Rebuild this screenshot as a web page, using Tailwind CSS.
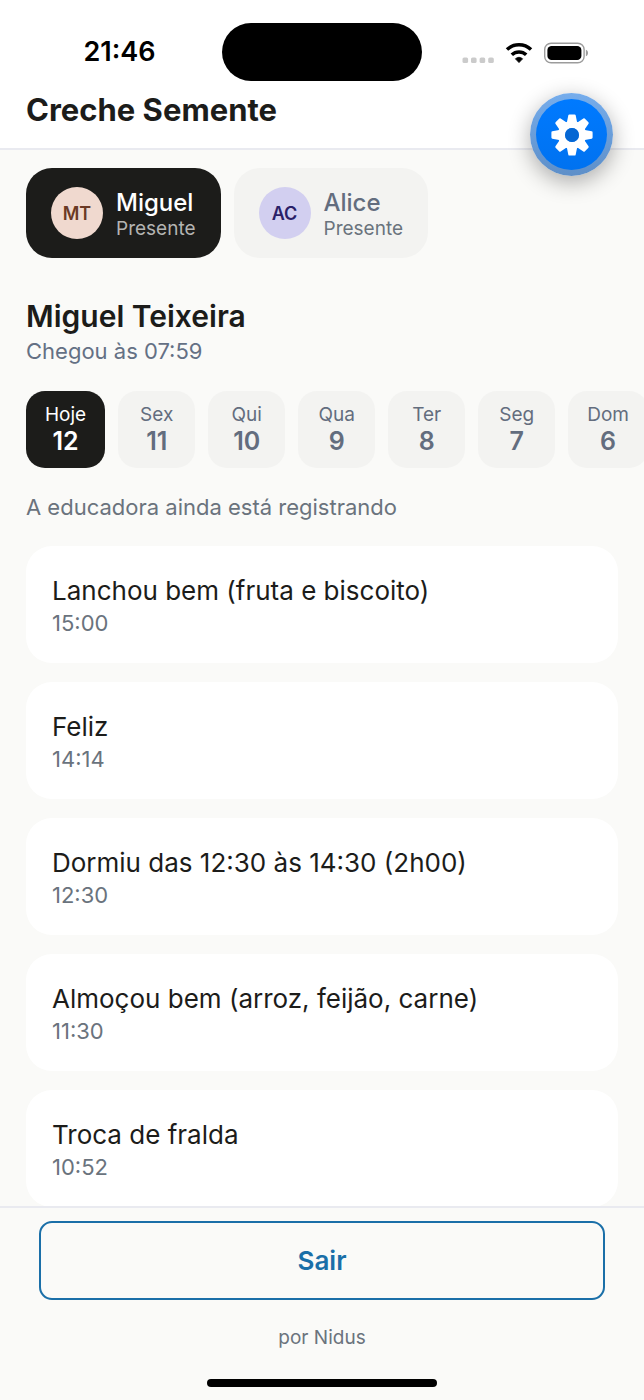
<!DOCTYPE html>
<html lang="pt-BR">
<head>
  <meta charset="UTF-8" />
  <meta name="viewport" content="width=device-width, initial-scale=1" />
  <title>Creche Semente</title>
  <script src="https://cdn.jsdelivr.net/npm/@tailwindcss/browser@4"></script>
</head>
<body class="relative flex h-screen flex-col overflow-hidden bg-[#fafaf8] font-['Inter',sans-serif] text-[#1c1c1a]">

  <header class="border-b-2 border-[#e9eaf0] bg-white">
    <!-- status bar -->
    <div class="flex h-[91px] items-start pt-[23px]">
      <div class="flex h-[59px] flex-1 items-center justify-center pl-[17px] text-[27px] font-semibold text-black">21:46</div>
      <div class="h-[58px] w-[200px] rounded-full bg-black"></div>
      <div class="flex h-[59px] flex-1 items-center justify-center pr-[17px]">
        <svg class="h-[22px] w-[126px]" viewBox="0 0 126 22" fill="none" aria-hidden="true">
          <g fill="#cbcbcb">
            <rect x="0.5" y="15.5" width="5.6" height="5.6" rx="1.6" />
            <rect x="9" y="15.5" width="5.6" height="5.6" rx="1.6" />
            <rect x="17.6" y="15.5" width="5.6" height="5.6" rx="1.6" />
            <rect x="26.2" y="15.5" width="5.6" height="5.6" rx="1.6" />
          </g>
          <g stroke="#000" stroke-width="3.5">
            <path d="M45 7.6a17.2 17.2 0 0 1 24 0" />
            <path d="M49.8 12.8a10.4 10.4 0 0 1 14.4 0" />
          </g>
          <path d="M53.4 16.8a5.6 5.6 0 0 1 7.2 0L57 20.6z" fill="#000" stroke="#000" stroke-width="0.8" stroke-linejoin="round" />
          <rect x="82.7" y="1.2" width="39.4" height="19.6" rx="6.4" stroke="#9c9c9c" stroke-width="1.4" />
          <rect x="85.4" y="3.9" width="34" height="14.2" rx="4.2" fill="#000" />
          <path d="M123.9 7.8c1.4.5 2.1 1.7 2.1 3.2s-.7 2.7-2.1 3.2z" fill="#9c9c9c" />
        </svg>
      </div>
    </div>
    <h1 class="px-[26px] pb-[19px] text-[31px] leading-[38px] font-bold">Creche Semente</h1>
  </header>

  <main class="flex-1 overflow-hidden px-[26px] pt-[18px]">
    <!-- crianças -->
    <div class="flex gap-[13px]">
      <button type="button" aria-pressed="true" class="flex h-[90px] items-center gap-[13px] rounded-[26px] bg-[#1c1c1a] px-[25px] text-left">
        <span class="flex size-[52px] items-center justify-center rounded-full bg-[#f0d9cf] text-[18px] font-semibold text-[#6b3a25]">MT</span>
        <span class="flex flex-col">
          <span class="text-[24px] leading-8 font-medium text-white">Miguel</span>
          <span class="text-[19px] leading-5 text-[#b4b4b2]">Presente</span>
        </span>
      </button>
      <button type="button" aria-pressed="false" class="flex h-[90px] items-center gap-[13px] rounded-[26px] bg-[#f3f3f1] px-[25px] text-left">
        <span class="flex size-[52px] items-center justify-center rounded-full bg-[#d2cff0] text-[18px] font-semibold text-[#2a2068]">AC</span>
        <span class="flex flex-col">
          <span class="text-[24px] leading-8 font-medium text-[#636d7e]">Alice</span>
          <span class="text-[19px] leading-5 text-[#6a737d]">Presente</span>
        </span>
      </button>
    </div>

    <h2 class="mt-10 text-[30px] leading-[37px] font-semibold">Miguel Teixeira</h2>
    <p class="text-[22px] leading-8 text-[#647084]">Chegou às 07:59</p>

    <!-- dias -->
    <div class="-mr-[26px] mt-6 flex gap-[13px] overflow-hidden text-[#636d7e]">
      <button type="button" aria-pressed="true" class="flex h-[77px] min-w-[77px] shrink-0 flex-col items-center justify-center rounded-[19px] bg-[#1c1c1a] px-[19px] text-white">
        <span class="text-[19px] leading-6">Hoje</span><span class="text-[25px] leading-[29px] font-semibold">12</span>
      </button>
      <button type="button" class="flex h-[77px] min-w-[77px] shrink-0 flex-col items-center justify-center rounded-[19px] bg-[#f3f3f1] px-[19px]">
        <span class="text-[19px] leading-6">Sex</span><span class="text-[25px] leading-[29px] font-semibold">11</span>
      </button>
      <button type="button" class="flex h-[77px] min-w-[77px] shrink-0 flex-col items-center justify-center rounded-[19px] bg-[#f3f3f1] px-[19px]">
        <span class="text-[19px] leading-6">Qui</span><span class="text-[25px] leading-[29px] font-semibold">10</span>
      </button>
      <button type="button" class="flex h-[77px] min-w-[77px] shrink-0 flex-col items-center justify-center rounded-[19px] bg-[#f3f3f1] px-[19px]">
        <span class="text-[19px] leading-6">Qua</span><span class="text-[25px] leading-[29px] font-semibold">9</span>
      </button>
      <button type="button" class="flex h-[77px] min-w-[77px] shrink-0 flex-col items-center justify-center rounded-[19px] bg-[#f3f3f1] px-[19px]">
        <span class="text-[19px] leading-6">Ter</span><span class="text-[25px] leading-[29px] font-semibold">8</span>
      </button>
      <button type="button" class="flex h-[77px] min-w-[77px] shrink-0 flex-col items-center justify-center rounded-[19px] bg-[#f3f3f1] px-[19px]">
        <span class="text-[19px] leading-6">Seg</span><span class="text-[25px] leading-[29px] font-semibold">7</span>
      </button>
      <button type="button" class="flex h-[77px] min-w-[77px] shrink-0 flex-col items-center justify-center rounded-[19px] bg-[#f3f3f1] px-[19px]">
        <span class="text-[19px] leading-6">Dom</span><span class="text-[25px] leading-[29px] font-semibold">6</span>
      </button>
    </div>

    <p class="mt-6 text-[22px] leading-[30px] text-[#6a737d]">A educadora ainda está registrando</p>

    <!-- registros do dia -->
    <ul class="mt-6 flex flex-col gap-[19px]">
      <li class="rounded-[26px] bg-white p-[26px]">
        <p class="text-[26px] leading-[37px]">Lanchou bem (fruta e biscoito)</p>
        <p class="text-[22px] leading-7 text-[#6a737d]">15:00</p>
      </li>
      <li class="rounded-[26px] bg-white p-[26px]">
        <p class="text-[26px] leading-[37px]">Feliz</p>
        <p class="text-[22px] leading-7 text-[#6a737d]">14:14</p>
      </li>
      <li class="rounded-[26px] bg-white p-[26px]">
        <p class="text-[26px] leading-[37px]">Dormiu das 12:30 às 14:30 (2h00)</p>
        <p class="text-[22px] leading-7 text-[#6a737d]">12:30</p>
      </li>
      <li class="rounded-[26px] bg-white p-[26px]">
        <p class="text-[26px] leading-[37px]">Almoçou bem (arroz, feijão, carne)</p>
        <p class="text-[22px] leading-7 text-[#6a737d]">11:30</p>
      </li>
      <li class="rounded-[26px] bg-white p-[26px]">
        <p class="text-[26px] leading-[37px]">Troca de fralda</p>
        <p class="text-[22px] leading-7 text-[#6a737d]">10:52</p>
      </li>
    </ul>
  </main>

  <footer class="flex flex-col items-center border-t-2 border-[#e9eaf0] px-[39px] pt-[13px] pb-[13px]">
    <button type="button" class="h-[79px] w-full rounded-[13px] border-2 border-[#1a6fa8] text-[26px] font-semibold text-[#1a6fa8]">Sair</button>
    <p class="mt-[25px] text-[19px] leading-[26px] text-[#6a737d]">por Nidus</p>
    <div class="mt-7 h-2 w-[230px] rounded-full bg-black"></div>
  </footer>

  <!-- botão flutuante -->
  <button type="button" aria-label="Configurações" class="absolute top-[93px] right-[31px] flex size-[83px] items-center justify-center rounded-full bg-linear-to-b from-[#76adec] to-[#5e8fc8] shadow-[0_6px_22px_rgba(0,0,0,0.32)]">
    <span class="flex size-[71px] items-center justify-center rounded-full bg-linear-to-b from-[#007aff] to-[#0072f0]">
      <svg class="size-[42px]" viewBox="-21 -21 42 42" aria-hidden="true">
        <defs>
          <path id="tooth" d="M-2.6-19.5H2.6L4-12.5H-4z" />
        </defs>
        <g fill="#fff" stroke="#fff" stroke-width="2.2" stroke-linejoin="round">
          <use href="#tooth" />
          <use href="#tooth" transform="rotate(45)" />
          <use href="#tooth" transform="rotate(90)" />
          <use href="#tooth" transform="rotate(135)" />
          <use href="#tooth" transform="rotate(180)" />
          <use href="#tooth" transform="rotate(225)" />
          <use href="#tooth" transform="rotate(270)" />
          <use href="#tooth" transform="rotate(315)" />
        </g>
        <circle r="10.5" fill="none" stroke="#fff" stroke-width="7.2" />
        <circle r="7" fill="#0667d3" />
      </svg>
    </span>
  </button>

</body>
</html>
